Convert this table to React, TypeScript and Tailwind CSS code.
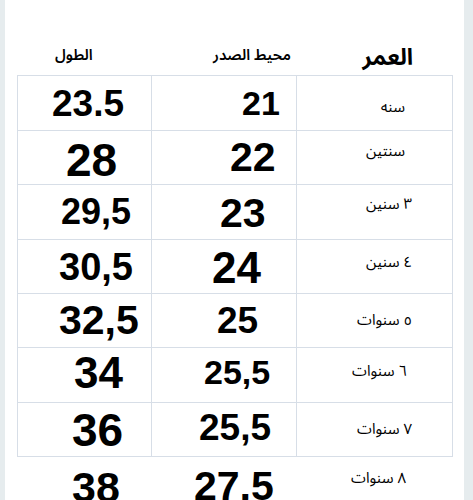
import React from "react";

type Row = {
  len: string;
  lenCls: string;
  chest: string;
  chestCls: string;
  age: string;
  ageCls: string;
  h: string;
};

const rows: Row[] = [
  { len: "23.5", lenCls: "pl-[34px] text-[37px]", chest: "21", chestCls: "pl-[90px] text-[34px]", age: "سنه", ageCls: "pr-[47px] pt-[8px]", h: "h-[55px]" },
  { len: "28", lenCls: "pl-[48px] text-[46px] pt-[4px]", chest: "22", chestCls: "pl-[78px] text-[41px]", age: "سنتين", ageCls: "pr-[47px] pb-[12px]", h: "h-[54px]" },
  { len: "29,5", lenCls: "pl-[43px] text-[36px]", chest: "23", chestCls: "pl-[68px] text-[41px] pt-[2px]", age: "٣ سنين", ageCls: "pr-[40px] pb-[16px]", h: "h-[55px]" },
  { len: "30,5", lenCls: "pl-[41px] text-[38px]", chest: "24", chestCls: "pl-[60px] text-[44px] pt-[2px]", age: "٤ سنين", ageCls: "pr-[40px] pb-[8px]", h: "h-[54px]" },
  { len: "32,5", lenCls: "pl-[41px] text-[41px]", chest: "25", chestCls: "pl-[65px] text-[37px]", age: "٥ سنوات", ageCls: "pr-[40px]", h: "h-[54px]" },
  { len: "34", lenCls: "pl-[56px] text-[44px] pb-[4px]", chest: "25,5", chestCls: "pl-[52px] text-[34px] pb-[6px]", age: "٦ سنوات", ageCls: "pr-[45px] pb-[8px]", h: "h-[55px]" },
  { len: "36", lenCls: "pl-[54px] text-[46px]", chest: "25,5", chestCls: "pl-[47px] text-[37px] pb-[4px]", age: "٧ سنوات", ageCls: "pr-[40px]", h: "h-[54px]" },
];

const last = { len: "38", chest: "27,5", age: "٨ سنوات" };

const num = "font-['Liberation_Sans',Arial,sans-serif] font-bold leading-none text-black whitespace-nowrap";
const ar = "font-['Noto_Sans_Arabic','DejaVu_Sans',sans-serif] text-[15px] leading-none text-black whitespace-nowrap";

export default function App() {
  return (
    <div className="flex h-[500px] w-[473px] overflow-hidden bg-[#e6ecee]">
      <div className="ml-[5px] flex h-[500px] w-[459px] flex-col overflow-hidden bg-white">
        {/* header */}
        <div className="ml-[12px] flex h-[75px] w-[436px] shrink-0">
          <div className="flex w-[135px] items-center pl-[38px] pt-[36px]">
            <span className={ar + " text-[14px] font-semibold"} dir="rtl">الطول</span>
          </div>
          <div className="flex w-[145px] items-center pl-[61px] pt-[36px]">
            <span className={ar + " text-[15px] font-semibold"} dir="rtl">محيط الصدر</span>
          </div>
          <div className="flex w-[156px] items-center justify-end pr-[40px] pt-[40px]">
            <span className={ar + " text-[23px] font-bold"} dir="rtl">العمر</span>
          </div>
        </div>
        {/* table */}
        <div className="ml-[12px] w-[436px] shrink-0 border-l border-t border-[#d7dee7]">
          {rows.map((r, i) => (
            <div key={i} className={"grid grid-cols-[134px_145px_156px] " + r.h}>
              <div className={"flex items-center border-b border-r border-[#d7dee7] " + r.lenCls}>
                <span className={num}>{r.len}</span>
              </div>
              <div className={"flex items-center border-b border-r border-[#d7dee7] " + r.chestCls}>
                <span className={num}>{r.chest}</span>
              </div>
              <div className={"flex items-center justify-end border-b border-r border-[#d7dee7] " + r.ageCls}>
                <span className={ar} dir="rtl">{r.age}</span>
              </div>
            </div>
          ))}
        </div>
        <div className="ml-[13px] grid h-[60px] w-[435px] shrink-0 grid-cols-[134px_145px_156px]">
          <div className="flex items-start pl-[54px] pt-[9px]">
            <span className={num + " text-[43px]"}>{last.len}</span>
          </div>
          <div className="flex items-start pl-[42px] pt-[9px]">
            <span className={num + " text-[41px]"}>{last.chest}</span>
          </div>
          <div className="flex items-start justify-end pr-[47px] pt-[14px]">
            <span className={ar} dir="rtl">{last.age}</span>
          </div>
        </div>
      </div>
    </div>
  );
}
